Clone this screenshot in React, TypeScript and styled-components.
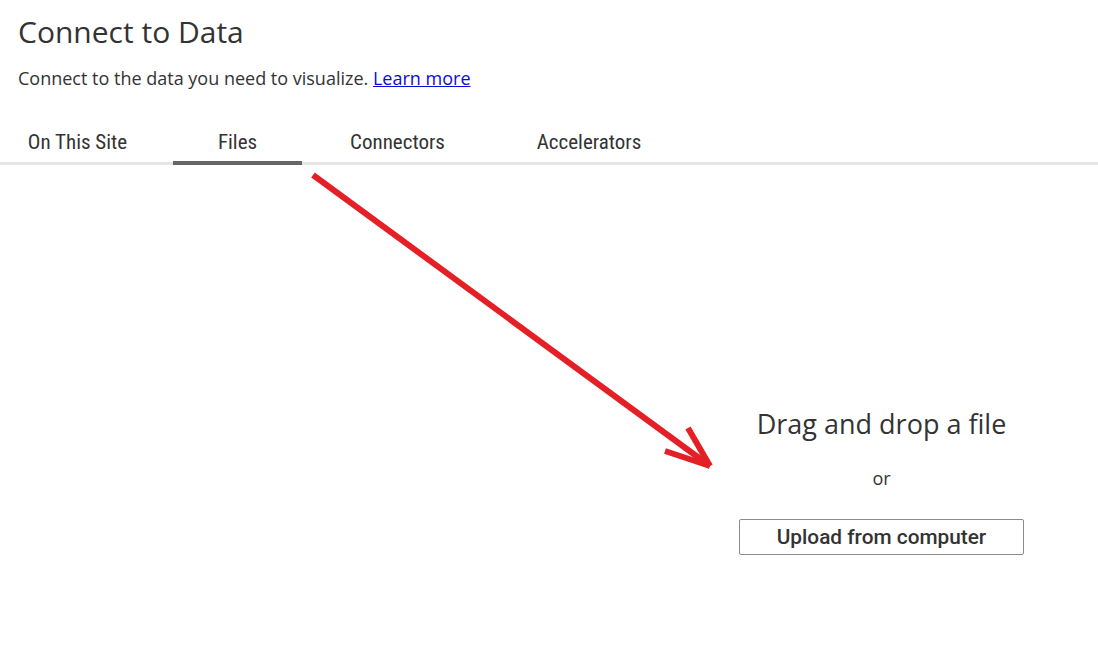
import React from "react";
import styled, { createGlobalStyle } from "styled-components";

const Global = createGlobalStyle`
  html, body { margin: 0; padding: 0; background: #fff; }
  body { font-family: "Open Sans", "Liberation Sans", sans-serif; color: #333; }
`;

const Page = styled.div`
  position: relative;
  width: 1098px;
  height: 648px;
  overflow: hidden;
  display: flex;
  flex-direction: column;
`;

const Header = styled.header`
  padding: 13px 18px 0 18px;
`;

const Title = styled.h1`
  margin: 0;
  font-family: "Open Sans", sans-serif;
  font-weight: 400;
  font-size: 30px;
  line-height: 38px;
  color: #333;
`;

const Subtitle = styled.p`
  margin: 15px 0 0 0;
  font-size: 18px;
  line-height: 24px;
  color: #333;
`;

const Link = styled.a`
  color: #0b0bd9;
  text-decoration: underline;
`;

const TabBar = styled.nav`
  margin-top: 35px;
  display: flex;
  gap: 31px;
  padding-left: 13px;
  border-bottom: 3px solid #e6e6e6;
  height: 37px;
  box-sizing: content-box;
`;

const Tab = styled.div<{ $active?: boolean; $width: number }>`
  width: ${(p) => p.$width}px;
  display: flex;
  justify-content: center;
  align-items: flex-start;
  padding-top: 5px;
  box-sizing: border-box;
  font-family: "Roboto Condensed", "Liberation Sans Narrow", Roboto, sans-serif;
  font-size: 21px;
  line-height: 24px;
  color: #333;
  border-bottom: 4px solid ${(p) => (p.$active ? "#666" : "transparent")};
  margin-bottom: -3px;
`;

const Body = styled.main`
  flex: 1;
  display: flex;
`;

const Spacer = styled.div`
  flex: 1;
`;

const DropColumn = styled.section`
  width: 433px;
  display: flex;
  flex-direction: column;
  align-items: center;
  padding-top: 241px;
`;

const DropTitle = styled.div`
  font-size: 27px;
  line-height: 36px;
  color: #333;
`;

const Or = styled.div`
  margin-top: 24px;
  font-size: 18px;
  line-height: 24px;
  color: #333;
`;

const UploadButton = styled.button`
  margin-top: 29px;
  width: 285px;
  height: 36px;
  border: 1px solid #8c8c8c;
  border-radius: 2px;
  background: #fff;
  font-family: Roboto, sans-serif;
  font-weight: 500;
  font-size: 20.8px;
  color: #333;
  cursor: pointer;
`;

const ArrowOverlay = styled.svg`
  position: absolute;
  left: 0;
  top: 0;
  pointer-events: none;
`;

export default function App() {
  return (
    <>
      <Global />
      <Page>
        <Header>
          <Title>Connect to Data</Title>
          <Subtitle>
            Connect to the data you need to visualize. <Link href="#">Learn more</Link>
          </Subtitle>
        </Header>
        <TabBar>
          <Tab $width={129}>On This Site</Tab>
          <Tab $width={129} $active>Files</Tab>
          <Tab $width={129}>Connectors</Tab>
          <Tab $width={192}>Accelerators</Tab>
        </TabBar>
        <Body>
          <Spacer />
          <DropColumn>
            <DropTitle>Drag and drop a file</DropTitle>
            <Or>or</Or>
            <UploadButton>Upload from computer</UploadButton>
          </DropColumn>
        </Body>
        <ArrowOverlay width="1098" height="648" viewBox="0 0 1098 648">
          <g stroke="#e41f25" strokeWidth="6" strokeLinecap="butt" fill="none">
            <line x1="313" y1="175" x2="710" y2="466" />
            <line x1="688" y1="428" x2="710" y2="466" />
            <line x1="665" y1="451" x2="710" y2="466" />
          </g>
        </ArrowOverlay>
      </Page>
    </>
  );
}
